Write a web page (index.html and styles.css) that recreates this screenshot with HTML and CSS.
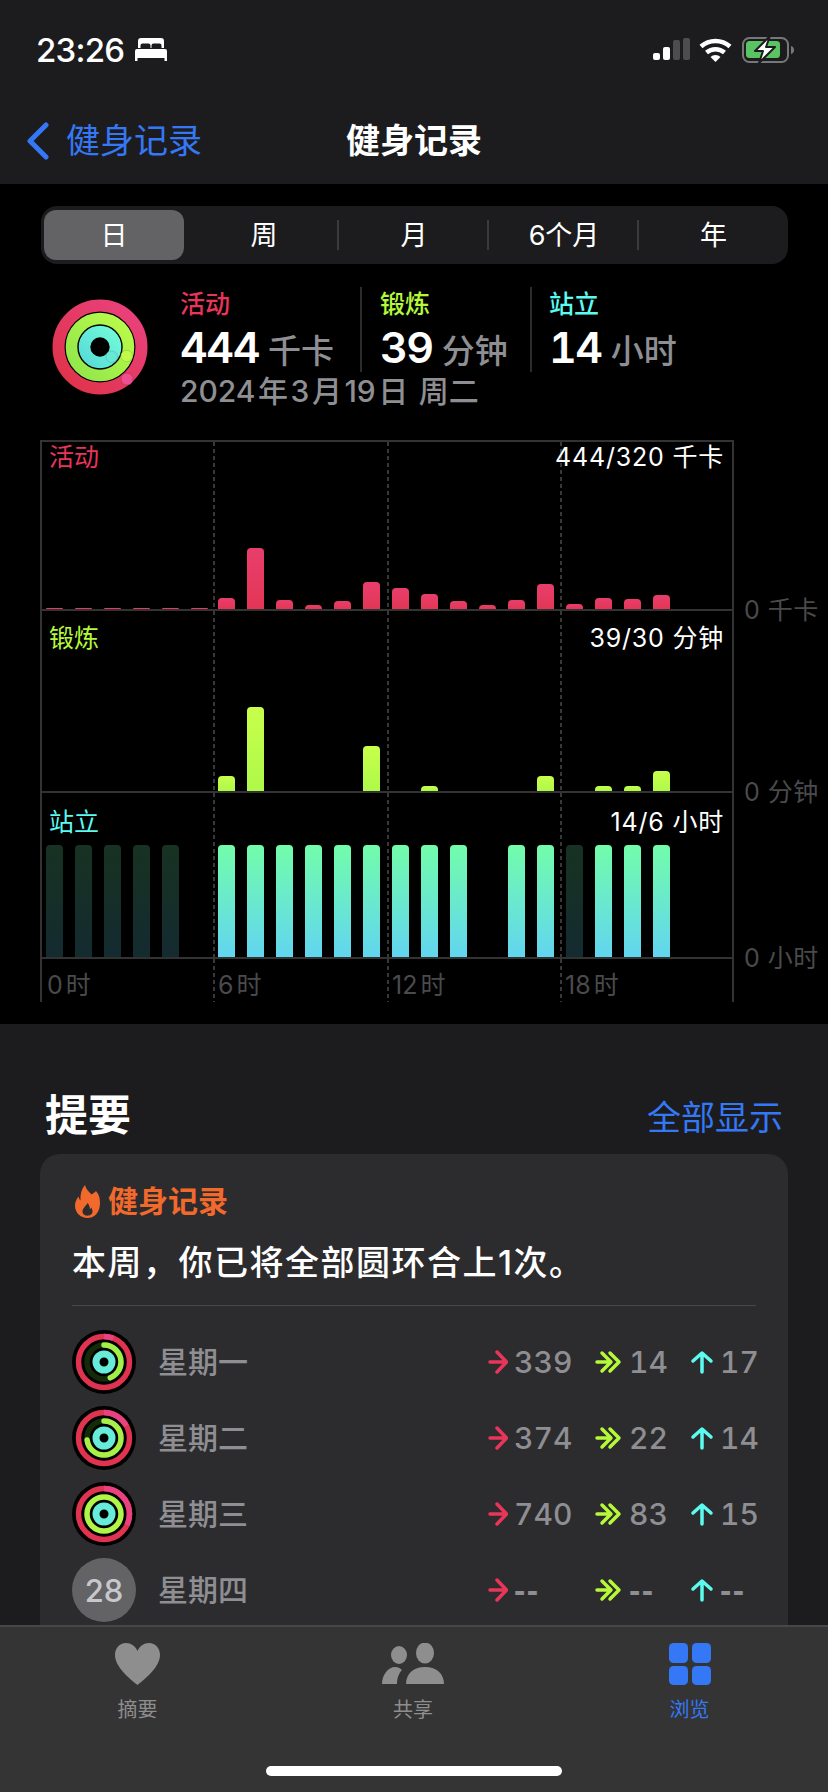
FILE: index.html
```html
<!DOCTYPE html>
<html lang="zh-CN">
<head>
  <meta charset="UTF-8">
  <meta name="viewport" content="width=device-width, initial-scale=1.0">
  <title>健身记录</title>
  <link rel="stylesheet" href="styles.css">
</head>
<body>
  <header class="topbar">
    <div class="status">
      <span class="clock">23:26</span>
      <svg class="bed" viewBox="0 0 32 23"><path d="M3 10V3a3 3 0 0 1 3-3h20a3 3 0 0 1 3 3v7h-2.500V7.500a2 2 0 0 0-2-2h-6a2 2 0 0 0-2 2V10h-1V7.500a2 2 0 0 0-2-2h-6a2 2 0 0 0-2 2V10z"/><path d="M2 11h28a2 2 0 0 1 2 2v10h-2.500v-3h-27v3H0V13a2 2 0 0 1 2-2z"/></svg>
      <svg class="sysicons" viewBox="0 0 142 28" width="142" height="28">
        <rect x="0" y="17" width="7" height="7" rx="2" fill="#fff"/>
        <rect x="10" y="11" width="7" height="13" rx="2" fill="#fff"/>
        <rect x="20" y="4" width="7" height="20" rx="2" fill="#4d4d4f"/>
        <rect x="30" y="2" width="7" height="22" rx="2" fill="#4d4d4f"/>
        <g fill="none" stroke="#fff" stroke-width="4.500">
          <path d="M48 10.500a22 22 0 0 1 29 0"/>
          <path d="M53.500 16.500a14 14 0 0 1 18 0"/>
        </g>
        <path d="M57.500 21a7 7 0 0 1 10 0l-5 5z" fill="#fff"/>
        <rect x="90" y="2" width="45" height="24" rx="6.500" fill="none" stroke="#77777a" stroke-width="2"/>
        <rect x="93" y="5" width="34" height="17" rx="3.500" fill="#5ac462"/>
        <path d="M138 10c2 .5 3 2 3 4s-1 3.500-3 4z" fill="#77777a"/>
        <path d="M117 0l-15 15h8l-4 12 16-16h-9z" fill="#fff" stroke="#1c1c1e" stroke-width="2" stroke-linejoin="round"/>
      </svg>
    </div>
    <nav class="navbar">
      <a class="back">
        <svg class="chevron" viewBox="0 0 24 38"><path d="M20 3 4 19l16 16" fill="none" stroke="#3478f6" stroke-width="5" stroke-linecap="round" stroke-linejoin="round"/></svg>
        <span>健身记录</span>
      </a>
      <h1 class="nav-title">健身记录</h1>
    </nav>
  </header>

  <section class="today">
    <div class="segments">
      <div class="seg selected">日</div>
      <div class="seg line">周</div>
      <div class="seg line">月</div>
      <div class="seg line">6个月</div>
      <div class="seg">年</div>
    </div>

    <div class="overview">
      <svg class="big-ring" viewBox="0 0 96 96">
        <defs>
          <linearGradient id="gr-red" x1="0" y1="1" x2="1" y2="0"><stop offset="0" stop-color="#df3247"/><stop offset="1" stop-color="#ea4280"/></linearGradient>
          <linearGradient id="gr-green" x1="0" y1="1" x2="1" y2="0"><stop offset="0" stop-color="#8fe64a"/><stop offset="1" stop-color="#bcfb4a"/></linearGradient>
          <linearGradient id="gr-teal" x1="0" y1="1" x2="1" y2="0"><stop offset="0" stop-color="#58dcd8"/><stop offset="1" stop-color="#70fad8"/></linearGradient>
        </defs>
        <circle cx="48" cy="48" r="41.500" fill="none" stroke="url(#gr-red)" stroke-width="12"/>
        <circle cx="75" cy="80" r="6" fill="#ee4f92" stroke="#b8304a" stroke-width=".6"/>
        <circle cx="48" cy="48" r="28.500" fill="none" stroke="url(#gr-green)" stroke-width="11.600"/>
        <circle cx="74.700" cy="57" r="5.800" fill="#c0fb4a" stroke="#86c83e" stroke-width=".6"/>
        <circle cx="48" cy="48" r="15.500" fill="none" stroke="url(#gr-teal)" stroke-width="11.600"/>
        <circle cx="59.700" cy="57.700" r="5.800" fill="#66e8d4" stroke="#4cbcb0" stroke-width=".6"/>
      </svg>
      <div class="totals">
        <div class="total-row">
          <div class="total first">
            <div class="total-name red">活动</div>
            <div class="total-value">444<small>千卡</small></div>
          </div>
          <div class="total second">
            <div class="total-name green">锻炼</div>
            <div class="total-value">39<small>分钟</small></div>
          </div>
          <div class="total third">
            <div class="total-name cyan">站立</div>
            <div class="total-value">14<small>小时</small></div>
          </div>
        </div>
        <div class="date">2024<i>年</i>3<i>月</i>19<i>日</i> 周二</div>
      </div>
    </div>

    <div class="chart">
      <div class="panel move-panel">
        <div class="plot">
          <div class="plot-head"><span class="red">活动</span><span class="goal">444/320 千卡</span></div>
          <div class="hours">
            <div class="block"><b class="bar move tiny"></b><b class="bar move tiny"></b><b class="bar move tiny"></b><b class="bar move tiny"></b><b class="bar move tiny"></b><b class="bar move tiny"></b></div>
            <div class="block"><b class="bar move" style="height:11px"></b><b class="bar move" style="height:61px"></b><b class="bar move" style="height:9px"></b><b class="bar move" style="height:4px"></b><b class="bar move" style="height:8px"></b><b class="bar move" style="height:27px"></b></div>
            <div class="block"><b class="bar move" style="height:21px"></b><b class="bar move" style="height:15px"></b><b class="bar move" style="height:8px"></b><b class="bar move" style="height:4px"></b><b class="bar move" style="height:9px"></b><b class="bar move" style="height:25px"></b></div>
            <div class="block"><b class="bar move" style="height:5px"></b><b class="bar move" style="height:11px"></b><b class="bar move" style="height:10px"></b><b class="bar move" style="height:14px"></b><b class="bar"></b><b class="bar"></b></div>
          </div>
        </div>
        <span class="unit">0 千卡</span>
      </div>

      <div class="panel exercise-panel">
        <div class="plot">
          <div class="plot-head"><span class="green">锻炼</span><span class="goal">39/30 分钟</span></div>
          <div class="hours">
            <div class="block"><b class="bar"></b><b class="bar"></b><b class="bar"></b><b class="bar"></b><b class="bar"></b><b class="bar"></b></div>
            <div class="block"><b class="bar exercise" style="height:15px"></b><b class="bar exercise" style="height:84px"></b><b class="bar"></b><b class="bar"></b><b class="bar"></b><b class="bar exercise" style="height:45px"></b></div>
            <div class="block"><b class="bar"></b><b class="bar exercise" style="height:5px"></b><b class="bar"></b><b class="bar"></b><b class="bar"></b><b class="bar exercise" style="height:15px"></b></div>
            <div class="block"><b class="bar"></b><b class="bar exercise" style="height:5px"></b><b class="bar exercise" style="height:5px"></b><b class="bar exercise" style="height:20px"></b><b class="bar"></b><b class="bar"></b></div>
          </div>
        </div>
        <span class="unit">0 分钟</span>
      </div>

      <div class="panel stand-panel">
        <div class="plot">
          <div class="plot-head"><span class="cyan">站立</span><span class="goal">14/6 小时</span></div>
          <div class="hours">
            <div class="block"><b class="bar stand dim"></b><b class="bar stand dim"></b><b class="bar stand dim"></b><b class="bar stand dim"></b><b class="bar stand dim"></b><b class="bar"></b></div>
            <div class="block"><b class="bar stand"></b><b class="bar stand"></b><b class="bar stand"></b><b class="bar stand"></b><b class="bar stand"></b><b class="bar stand"></b></div>
            <div class="block"><b class="bar stand"></b><b class="bar stand"></b><b class="bar stand"></b><b class="bar"></b><b class="bar stand"></b><b class="bar stand"></b></div>
            <div class="block"><b class="bar stand dim"></b><b class="bar stand"></b><b class="bar stand"></b><b class="bar stand"></b><b class="bar"></b><b class="bar"></b></div>
          </div>
        </div>
        <span class="unit">0 小时</span>
      </div>

      <div class="time-axis">
        <span>0<i>时</i></span><span>6<i>时</i></span><span>12<i>时</i></span><span>18<i>时</i></span>
      </div>
    </div>
  </section>

  <section class="summary">
    <div class="summary-head">
      <h2>提要</h2>
      <a class="show-all">全部显示</a>
    </div>
    <div class="card">
      <div class="card-title">
        <svg class="flame" viewBox="0 0 25 33"><path fill-rule="evenodd" d="M10 0c1 4 3 6 6.500 9.500C20 7.500 21 6 21 6c2.500 3 4 6 4 12 0 9-5.500 15-12.500 15S0 28 0 20.500C0 17 1.500 14 3.500 11.500c.5 2 1 3 2 4C5 9.500 6.500 4 10 0zm2.500 18c-1 2.500-5 5-5 8.500 0 2.500 2.300 4.200 5 4.200s5-1.700 5-4.200c0-1.500-.5-2.800-1.300-4-.3.8-.7 1.300-1.400 1.800.2-2.300-.8-4.700-2.300-6.300z" fill="#f2692c"/></svg>
        <span>健身记录</span>
      </div>
      <p class="card-text">本周，你已将全部圆环合上1次。</p>

      <div class="day-row">
        <svg class="mini-ring" viewBox="0 0 64 64">
          <circle cx="32" cy="32" r="32" fill="#000"/>
          <circle class="arc" cx="32" cy="32" r="25.500" stroke="#df3350" stroke-width="5.500"/>
          <circle class="arc" cx="32" cy="32" r="25.500" stroke="#ea4280" stroke-width="5.500" pathLength="100" stroke-dasharray="6 94"/>
          <circle class="arc" cx="32" cy="32" r="17" stroke="#142a08" stroke-width="5.500"/>
          <circle class="arc" cx="32" cy="32" r="17" stroke="#a0f048" stroke-width="5.500" pathLength="100" stroke-dasharray="44 100" stroke-linecap="round"/>
          <circle class="arc" cx="32" cy="32" r="8" stroke="#66ecd8" stroke-width="7"/>
        </svg>
        <span class="day-name">星期一</span>
        <div class="day-stats">
          <div class="stat"><svg class="arrow one" viewBox="0 0 20 24"><path d="M2 12h15M9 2l9.500 10L9 22" stroke="#e8355a"/></svg><span>339</span></div>
          <div class="stat"><svg class="arrow two" viewBox="0 0 27 24"><path d="M2 12h12M7 3l9 9-9 9M15 3l9 9-9 9" stroke="#b6f83a"/></svg><span>14</span></div>
          <div class="stat"><svg class="arrow three" viewBox="0 0 24 24"><path d="M12 22V4M3 11l9-8 9 8" stroke="#5cfbf0"/></svg><span>17</span></div>
        </div>
      </div>

      <div class="day-row">
        <svg class="mini-ring" viewBox="0 0 64 64">
          <circle cx="32" cy="32" r="32" fill="#000"/>
          <circle class="arc" cx="32" cy="32" r="25.500" stroke="#df3350" stroke-width="5.500"/>
          <circle class="arc" cx="32" cy="32" r="25.500" stroke="#ea4280" stroke-width="5.500" pathLength="100" stroke-dasharray="17 83"/>
          <circle class="arc" cx="32" cy="32" r="17" stroke="#142a08" stroke-width="5.500"/>
          <circle class="arc" cx="32" cy="32" r="17" stroke="#a8f048" stroke-width="5.500" pathLength="100" stroke-dasharray="73 100" stroke-linecap="round"/>
          <circle class="arc" cx="32" cy="32" r="8" stroke="#66ecd8" stroke-width="7"/>
        </svg>
        <span class="day-name">星期二</span>
        <div class="day-stats">
          <div class="stat"><svg class="arrow one" viewBox="0 0 20 24"><path d="M2 12h15M9 2l9.500 10L9 22" stroke="#e8355a"/></svg><span>374</span></div>
          <div class="stat"><svg class="arrow two" viewBox="0 0 27 24"><path d="M2 12h12M7 3l9 9-9 9M15 3l9 9-9 9" stroke="#b6f83a"/></svg><span>22</span></div>
          <div class="stat"><svg class="arrow three" viewBox="0 0 24 24"><path d="M12 22V4M3 11l9-8 9 8" stroke="#5cfbf0"/></svg><span>14</span></div>
        </div>
      </div>

      <div class="day-row">
        <svg class="mini-ring" viewBox="0 0 64 64">
          <circle cx="32" cy="32" r="32" fill="#000"/>
          <circle class="arc" cx="32" cy="32" r="25.500" stroke="#df3350" stroke-width="5.500"/>
          <circle class="arc" cx="32" cy="32" r="25.500" stroke="#ea4280" stroke-width="5.500" pathLength="100" stroke-dasharray="32 68"/>
          <circle class="arc" cx="32" cy="32" r="17" stroke="#b0f648" stroke-width="5.500"/>
          <circle class="arc" cx="32" cy="32" r="8" stroke="#66ecd8" stroke-width="7"/>
        </svg>
        <span class="day-name">星期三</span>
        <div class="day-stats">
          <div class="stat"><svg class="arrow one" viewBox="0 0 20 24"><path d="M2 12h15M9 2l9.500 10L9 22" stroke="#e8355a"/></svg><span>740</span></div>
          <div class="stat"><svg class="arrow two" viewBox="0 0 27 24"><path d="M2 12h12M7 3l9 9-9 9M15 3l9 9-9 9" stroke="#b6f83a"/></svg><span>83</span></div>
          <div class="stat"><svg class="arrow three" viewBox="0 0 24 24"><path d="M12 22V4M3 11l9-8 9 8" stroke="#5cfbf0"/></svg><span>15</span></div>
        </div>
      </div>

      <div class="day-row">
        <div class="day-badge">28</div>
        <span class="day-name">星期四</span>
        <div class="day-stats">
          <div class="stat"><svg class="arrow one" viewBox="0 0 20 24"><path d="M2 12h15M9 2l9.500 10L9 22" stroke="#e8355a"/></svg><span class="dash">--</span></div>
          <div class="stat"><svg class="arrow two" viewBox="0 0 27 24"><path d="M2 12h12M7 3l9 9-9 9M15 3l9 9-9 9" stroke="#b6f83a"/></svg><span class="dash">--</span></div>
          <div class="stat"><svg class="arrow three" viewBox="0 0 24 24"><path d="M12 22V4M3 11l9-8 9 8" stroke="#5cfbf0"/></svg><span class="dash">--</span></div>
        </div>
      </div>
    </div>
  </section>

  <footer class="tabbar">
    <div class="tabs">
      <div class="tab">
        <svg class="tab-icon" width="45" height="42" viewBox="0 0 45 42"><path d="M22.500 42C15 36 0 24 0 12 0 5 4.500 0 11 0c5 0 9.500 3 11.500 8C24.500 3 29 0 34 0c6.500 0 11 5 11 12 0 12-15 24-22.500 30z" fill="#8e8e8e"/></svg>
        <span>摘要</span>
      </div>
      <div class="tab">
        <svg class="tab-icon" width="62" height="42" viewBox="0 0 62 42"><ellipse cx="17" cy="12" rx="8" ry="9" fill="#8e8e8e"/><ellipse cx="43" cy="10" rx="9" ry="10.500" fill="#8e8e8e"/><path d="M0 41c0-9 6-17 13-17 3 0 5 1 7 3-3 3-5 8-5 14z" fill="#8e8e8e"/><path d="M24 41c0-10 7-17 19-17s19 7 19 17z" fill="#8e8e8e"/></svg>
        <span>共享</span>
      </div>
      <div class="tab active">
        <svg class="tab-icon" width="42" height="42" viewBox="0 0 42 42"><rect width="19" height="20" rx="4.500" fill="#3478f6"/><rect x="23" width="19" height="20" rx="4.500" fill="#3478f6"/><rect y="23" width="19" height="19" rx="4.500" fill="#3478f6"/><rect x="23" y="23" width="19" height="19" rx="4.500" fill="#3478f6"/></svg>
        <span>浏览</span>
      </div>
    </div>
    <div class="home-bar"></div>
  </footer>
</body>
</html>
```

FILE: styles.css
```css
* { box-sizing: border-box; }
html, body { margin: 0; padding: 0; }
body { position: relative; width: 828px; height: 1792px; overflow: hidden; background: #1c1c1e; color: #fff; font-family: Inter, "Noto Sans CJK SC", sans-serif; }
h1, h2, p { margin: 0; }
i { font-style: normal; }

.red { color: #e8355a; }
.green { color: #b6f83a; }
.cyan { color: #5cfbf0; }

/* top */
.topbar { height: 184px; background: #1c1c1e; }
.status { height: 100px; padding: 36px 33px 0 36px; display: flex; align-items: flex-start; }
.clock { font-size: 33px; line-height: 28px; font-weight: 500; letter-spacing: -.8px; }
.bed { width: 32px; height: 23px; margin: 2px 0 0 11px; fill: #fff; }
.sysicons { margin: 0 0 0 auto; overflow: visible; }
.navbar { height: 84px; display: grid; grid-template-columns: 1fr auto 1fr; align-items: center; padding: 0 27px; margin-top: -1px; }
.back { display: flex; align-items: center; gap: 16px; color: #3478f6; font-size: 34px; line-height: 46px; }
.chevron { width: 24px; height: 38px; margin-left: -1px; }
.nav-title { grid-column: 2; font-size: 34px; line-height: 46px; font-weight: 700; }

/* black area */
.today { height: 840px; background: #000; padding-top: 22px; }
.segments { width: 747px; height: 58px; margin-left: 41px; background: #1c1c1e; border-radius: 16px; display: grid; grid-template-columns: 148px 150px 150px 150px 149px; }
.seg { position: relative; display: flex; align-items: center; justify-content: center; font-size: 27px; padding-bottom: 4px; }
.seg.selected { margin: 4px 5px 4px 3px; background: #636366; border-radius: 12px; }
.seg.line::after { content: ""; position: absolute; right: 0; top: 14px; height: 30px; border-right: 2px solid #3a3a3c; }

.overview { display: flex; margin-top: 23px; }
.big-ring { width: 96px; height: 96px; margin: 12px 0 0 52px; }
.totals { margin-left: 34px; }
.total-row { display: flex; height: 85px; }
.total { padding-top: 2px; }
.total.first { width: 178px; }
.total.second { width: 170px; padding-left: 20px; border-left: 2px solid #2c2c2e; }
.total.third { padding-left: 19px; border-left: 2px solid #2c2c2e; }
.total-name { font-size: 25px; line-height: 30px; font-weight: 500; margin-left: -2px; }
.total-value { font-size: 43px; line-height: 50px; margin: 3px 0 0 -2px; font-weight: 600; letter-spacing: -1.500px; font-feature-settings: "tnum"; }
.total-value small { font-size: 33px; font-weight: 500; color: #8e8e93; margin-left: 9px; letter-spacing: 0; }
.date { font-size: 30px; line-height: 34px; margin: 2px 0 0 -2px; font-weight: 500; color: #8e8e93; }
.date i { margin: 0 2.500px; }

/* chart */
.chart { margin: 32px 0 0 40px; }
.panel { display: flex; }
.plot { position: relative; width: 694px; flex: none; border-left: 2px solid #333; border-right: 2px solid #333; border-bottom: 2px solid #333; }
.move-panel .plot { border-top: 2px solid #333; height: 171px; }
.exercise-panel .plot { height: 182px; }
.stand-panel .plot { height: 166px; }
.plot-head { position: absolute; left: 7px; right: 8px; top: 0; display: flex; justify-content: space-between; font-size: 25px; line-height: 30px; }
.exercise-panel .plot-head { top: 12px; }
.stand-panel .plot-head { top: 14px; }
.goal { color: #fff; letter-spacing: .8px; }
.hours { height: 100%; display: grid; grid-template-columns: 171px 174px 173px 172px; }
.block { display: flex; align-items: flex-end; min-width: 0; padding-left: 5px; background: linear-gradient(#383838 4px, transparent 4px) left top / 2px 7px repeat-y; }
.block:first-child { background: none; padding-left: 4px; }
.block:last-child { padding-left: 6px; }
.bar { display: block; flex: none; width: 17px; margin-right: 12px; border-radius: 4px 4px 0 0; }
.bar.move { background: linear-gradient(#e83e6c, #e33655); }
.bar.tiny { height: 1px; }
.bar.exercise { background: linear-gradient(#c8ff4a, #aef94a); }
.bar.stand { height: 112px; background: linear-gradient(#72fdaa, #62d5f0); }
.bar.dim { opacity: .2; }
.unit { align-self: flex-end; margin: 0 0 -14px 10px; font-size: 25px; line-height: 30px; color: #4a4a4c; white-space: nowrap; letter-spacing: .5px; }

.time-axis { width: 694px; height: 43px; display: grid; grid-template-columns: 171px 174px 173px 172px; border-left: 2px solid #333; border-right: 2px solid #333; font-size: 25px; color: #4a4a4c; }
.time-axis span { padding: 11px 0 0 5px; line-height: 30px; background: linear-gradient(#383838 4px, transparent 4px) left top / 2px 7px repeat-y; }
.time-axis span:first-child { background: none; }
.time-axis i { margin-left: 3px; }

/* summary */
.summary { padding: 70px 40px 0; }
.summary-head { display: flex; justify-content: space-between; align-items: center; height: 42px; margin-bottom: 18px; padding: 0 5px 0 5px; }
.summary-head h2 { font-size: 43px; line-height: 42px; font-weight: 700; }
.show-all { font-size: 34px; color: #3478f6; }
.card { background: #2c2c2e; border-radius: 20px 20px 0 0; padding: 30px 32px 0; height: 520px; }
.card-title { display: flex; align-items: center; gap: 8px; height: 34px; margin-left: 3px; font-size: 30px; font-weight: 700; color: #f2692c; }
.card-title span { padding-bottom: 4px; }
.flame { width: 25px; height: 33px; }
.card-text { margin-top: 23px; padding-bottom: 20px; border-bottom: 1px solid #48484a; font-size: 34px; line-height: 44px; font-weight: 500; letter-spacing: 1.500px; }
.day-row { display: flex; align-items: center; height: 76px; }
.card-text + .day-row { margin-top: 18px; }
.mini-ring, .day-badge { width: 64px; height: 64px; flex: none; }
.arc { fill: none; transform: rotate(-90deg); transform-origin: 32px 32px; }
.day-badge { border-radius: 50%; background: #636366; color: #c7c7cc; font-size: 31px; font-weight: 500; display: flex; align-items: center; justify-content: center; }
.day-name { margin-left: 22px; padding-bottom: 4px; font-size: 30px; font-weight: 500; color: #8e8e93; }
.day-stats { margin-left: auto; width: 268px; display: grid; grid-template-columns: 107px 95px 66px; }
.stat { display: flex; align-items: center; font-size: 30px; font-weight: 500; color: #8e8e93; font-feature-settings: "tnum"; white-space: nowrap; }
.dash { font-family: "Liberation Sans", sans-serif; font-size: 34px; font-weight: 700; font-feature-settings: normal; letter-spacing: 1.500px; }
.arrow { height: 24px; flex: none; fill: none; stroke-width: 3.500; stroke-linecap: round; stroke-linejoin: round; }
.arrow.one { width: 20px; margin-right: 6px; }
.arrow.two { width: 27px; margin-right: 7px; }
.arrow.three { width: 24px; margin-right: 6px; }

/* tab bar sits over the card */
.tabbar { position: absolute; left: 0; right: 0; bottom: 0; height: 167px; background: #343434; border-top: 2px solid #474747; }
.tabs { display: grid; grid-template-columns: 275px 276px 277px; padding-top: 16px; }
.tab { display: flex; flex-direction: column; align-items: center; font-size: 20px; color: #8e8e8e; }
.tab-icon { display: block; }
.tab span { margin-top: 10px; line-height: 30px; }
.tab.active { color: #3478f6; }
.home-bar { position: absolute; left: 266px; bottom: 16px; width: 296px; height: 10px; border-radius: 5px; background: #fff; }
```
